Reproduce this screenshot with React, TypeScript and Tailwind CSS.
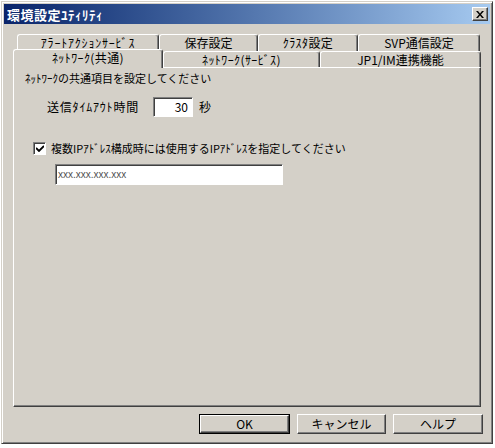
import React from 'react';

const raised =
  'border border-t-white border-l-white border-r-[#404040] border-b-[#404040] shadow-[inset_-1px_-1px_#808080]';
const sunken =
  'border border-t-[#808080] border-l-[#808080] border-r-white border-b-white shadow-[inset_1px_1px_#404040]';

const Tab: React.FC<{ label: string; w: string; active?: boolean; track?: string }> = ({
  label,
  w,
  active,
  track = '',
}) => (
  <div
    className={`${w} ${track} flex items-center justify-center whitespace-nowrap rounded-t-[3px] border-t border-l border-r border-t-white border-l-white border-r-[#404040] shadow-[inset_-1px_0_#808080] bg-[#d4d0c8] ${
      active ? 'relative z-10 h-[19px] -mb-[1px] pb-[3px]' : 'h-full'
    }`}
  >
    {label}
  </div>
);

const Button: React.FC<{ label: string; w: string; primary?: boolean }> = ({ label, w, primary }) => (
  <div className={`${w} h-[20px] ${primary ? 'border border-black' : ''}`}>
    <div className={`h-full flex items-center justify-center ${raised} bg-[#d4d0c8]`}>{label}</div>
  </div>
);

export default function App() {
  return (
    <div className="w-[495px] h-[448px] bg-white pt-[1px] pl-[1px] font-['Noto_Sans_CJK_JP',sans-serif] text-[12px] leading-none text-black">
      <div className="w-[492px] h-[443px] bg-[#d4d0c8] border border-t-[#d4d0c8] border-l-[#d4d0c8] border-r-[#404040] border-b-[#404040] shadow-[inset_1px_1px_white,inset_-1px_-1px_#808080] p-[2px] flex flex-col">
        {/* title bar */}
        <div className="h-[20px] flex items-center justify-between bg-gradient-to-r from-[#0a246a] to-[#a6caf0] pl-[3px] pr-[2px]">
          <span className="text-white font-bold text-[13px] tracking-[0.5px]">環境設定ﾕﾃｨﾘﾃｨ</span>
          <div className={`w-[16px] h-[14px] flex items-center justify-center ${raised} bg-[#d4d0c8]`}>
            <svg width="8" height="7" viewBox="0 0 8 7">
              <path d="M0 0h2l2 2.5L6 0h2L5 3.5 8 7H6L4 4.5 2 7H0l3-3.5z" fill="#000" />
            </svg>
          </div>
        </div>

        {/* tabs */}
        <div className="mt-[10px] ml-[9px] w-[468px]">
          <div className="flex h-[17px] pl-[4px]">
            <Tab label="ｱﾗｰﾄｱｸｼｮﾝｻｰﾋﾞｽ" w="w-[142px]" track="tracking-[0.8px]" />
            <Tab label="保存設定" w="w-[99px]" />
            <Tab label="ｸﾗｽﾀ設定" w="w-[100px]" track="tracking-[0.4px]" />
            <Tab label="SVP通信設定" w="w-[122px]" />
          </div>
          <div className="flex items-end h-[16px]">
            <Tab label="ﾈｯﾄﾜｰｸ(共通)" w="w-[150px]" track="tracking-[0.4px]" active />
            <Tab label="ﾈｯﾄﾜｰｸ(ｻｰﾋﾞｽ)" w="w-[157px]" track="tracking-[0.4px]" />
            <Tab label="JP1/IM連携機能" w="w-[161px]" />
          </div>

          {/* panel */}
          <div className="h-[340px] border border-t-white border-l-white border-r-[#404040] border-b-[#404040] shadow-[inset_-1px_-1px_#808080] pt-[5px] pl-[11px]">
            <div className="h-[12px] text-[11px]">ﾈｯﾄﾜｰｸの共通項目を設定してください</div>

            <div className="mt-[12px] ml-[22px] flex items-center h-[20px]">
              <span className="w-[106px] tracking-[0.8px]">送信ﾀｲﾑｱｳﾄ時間</span>
              <div className={`w-[40px] h-[20px] bg-white ${sunken} flex items-center justify-end pr-[4px]`}>30</div>
              <span className="ml-[6px]">秒</span>
            </div>

            <div className="mt-[25px] ml-[8px] flex items-center h-[13px]">
              <div className={`w-[13px] h-[13px] bg-white ${sunken} flex items-center justify-center`}>
                <svg width="8" height="7" viewBox="0 0 8 7">
                  <path d="M0 3l3 3 5-5" stroke="#000" strokeWidth="1.8" fill="none" />
                </svg>
              </div>
              <span className="ml-[5px] text-[11px]">複数IPｱﾄﾞﾚｽ構成時には使用するIPｱﾄﾞﾚｽを指定してください</span>
            </div>

            <div className={`mt-[9px] ml-[30px] w-[228px] h-[21px] bg-white ${sunken} flex items-center pl-[2px] text-[10px] text-[#505050] font-['Liberation_Sans',sans-serif]`}>
              xxx.xxx.xxx.xxx
            </div>
          </div>
        </div>

        {/* buttons */}
        <div className="mt-[7px] flex justify-end gap-[7px] pr-[7px]">
          <Button label="OK" w="w-[91px]" primary />
          <Button label="キャンセル" w="w-[89px]" />
          <Button label="ヘルプ" w="w-[90px]" />
        </div>
      </div>
    </div>
  );
}
